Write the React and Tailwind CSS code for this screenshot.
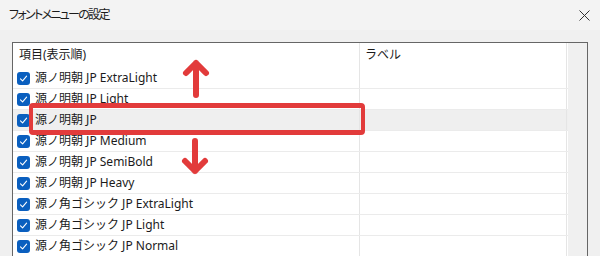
const rows = [
  "源ノ明朝 JP ExtraLight",
  "源ノ明朝 JP Light",
  "源ノ明朝 JP",
  "源ノ明朝 JP Medium",
  "源ノ明朝 JP SemiBold",
  "源ノ明朝 JP Heavy",
  "源ノ角ゴシック JP ExtraLight",
  "源ノ角ゴシック JP Light",
  "源ノ角ゴシック JP Normal",
];

const font = "font-['Noto_Sans','Noto_Sans_CJK_JP',sans-serif]";

function Check() {
  return (
    <span className="flex h-[13px] w-[13px] shrink-0 items-center justify-center rounded-[3px] bg-[#0a5fbf]">
      <svg width="9" height="9" viewBox="0 0 9 9" fill="none">
        <path d="M1.5 4.8 L3.6 6.8 L7.6 2.2" stroke="#fff" strokeWidth="1.1" strokeLinecap="round" strokeLinejoin="round" />
      </svg>
    </span>
  );
}

export default function App() {
  return (
    <div className={`h-[256px] w-[600px] overflow-hidden bg-[#f0f0f0] text-[#1b1b1b] ${font}`}>
      <div className="flex h-[30px] items-center justify-between bg-[#f3f3f3] pl-[9px] pr-[10px]">
        <span className="text-[12px] tracking-[-1.7px] [font-feature-settings:'palt']">フォントメニューの設定</span>
        <svg width="11" height="11" viewBox="0 0 11 11">
          <path d="M0.5 0.5 L10.5 10.5 M10.5 0.5 L0.5 10.5" stroke="#333" strokeWidth="1" />
        </svg>
      </div>

      <div className="px-3 pt-3">
        <div className="relative flex border border-[#666] bg-white">
          <div className="flex-1">
            <div className="flex h-[25px] items-center text-[12px]">
              <div className="flex h-full w-[347px] items-center border-r border-[#e5e5e5] pb-[2px] pl-[6px]">項目(表示順)</div>
              <div className="flex h-full w-[207px] items-center border-r border-[#e5e5e5] pb-[2px] pl-[5px]">ラベル</div>
            </div>
            {rows.map((r, i) => (
              <div
                key={r}
                className={`flex h-[21px] border-b border-[#ebebeb] text-[12px] ${i === 2 ? "bg-[#efefef]" : ""}`}
              >
                <div className="flex h-full w-[347px] items-center gap-[5px] border-r border-[#e5e5e5] pl-[4px]">
                  <Check />
                  <span>{r}</span>
                </div>
                <div className="h-full w-[207px] border-r border-[#e5e5e5]" />
              </div>
            ))}
          </div>
          <div className="w-[19px] bg-[#f0f0f0]" />

          <div className="absolute left-[16px] top-[60px] h-[32px] w-[336px] rounded-[4px] border-x-4 border-y-[5px] border-[#e23b3b]" />
          <svg className="absolute left-0 top-0" width="400" height="220" viewBox="13 43 400 220" fill="none">
            <path d="M196 95 V63 M186 73 L196 63 L206 73" stroke="#e23b3b" strokeWidth="6" strokeLinecap="round" strokeLinejoin="round" />
            <path d="M195 141 V171 M185 161 L195 171 L205 161" stroke="#e23b3b" strokeWidth="6" strokeLinecap="round" strokeLinejoin="round" />
          </svg>
        </div>
      </div>
    </div>
  );
}
